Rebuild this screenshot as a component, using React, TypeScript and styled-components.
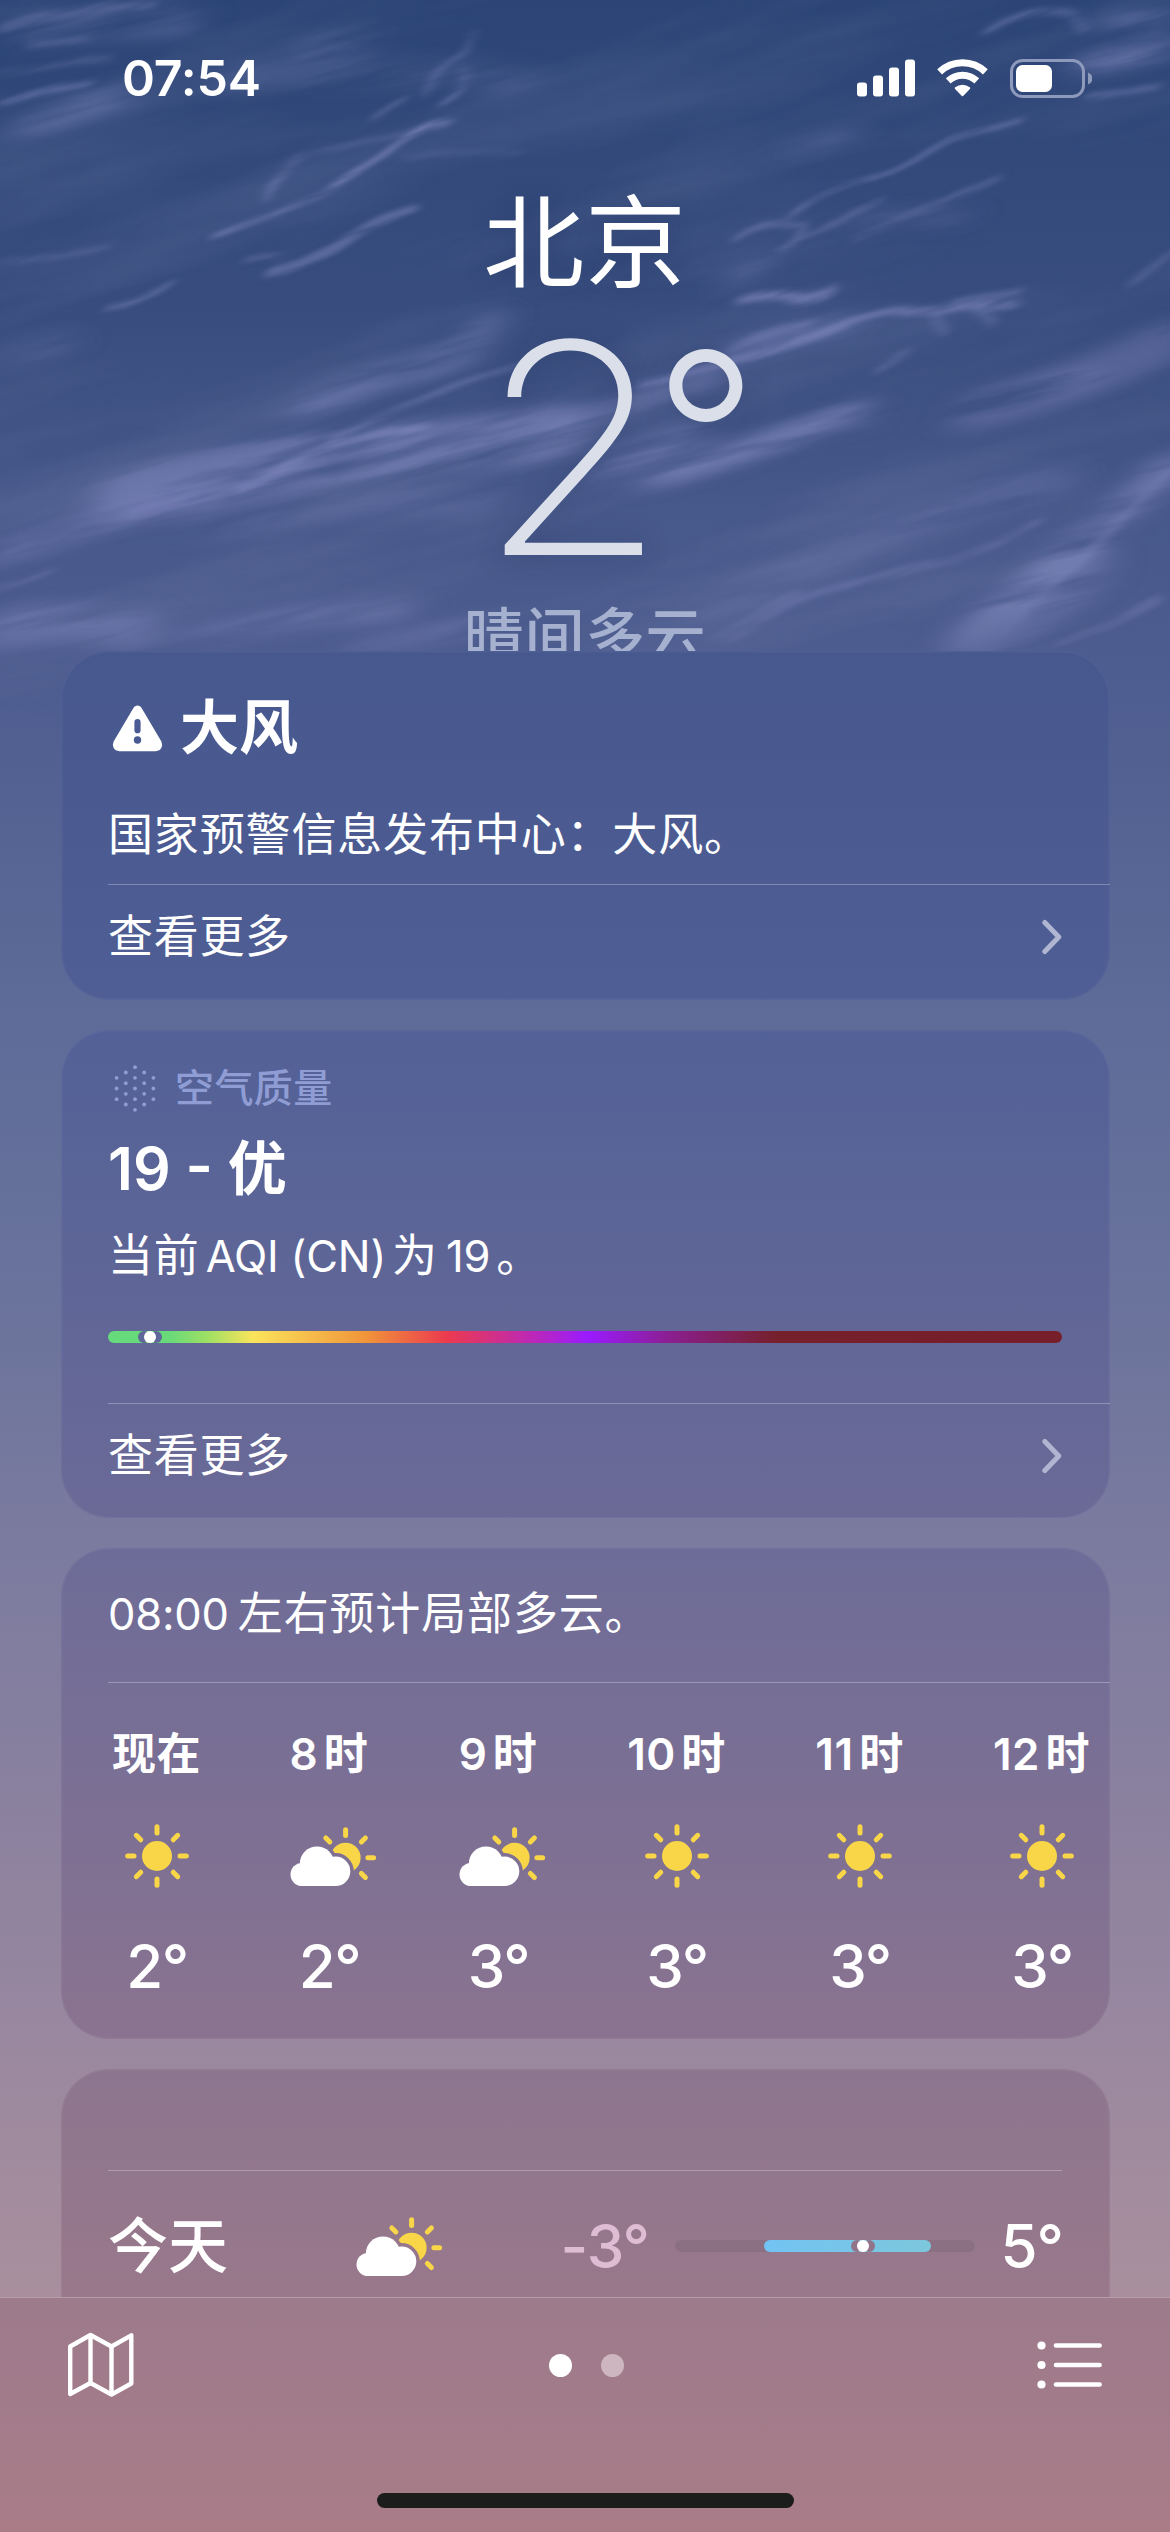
import React from 'react';
import styled, { createGlobalStyle } from 'styled-components';

const GlobalStyle = createGlobalStyle`
  * { box-sizing: border-box; }
  html, body { margin: 0; padding: 0; }
  body {
    font-family: Inter, "Noto Sans CJK SC", sans-serif;
    color: #fff;
    -webkit-font-smoothing: antialiased;
  }
  svg { display: block; }
`;

const Screen = styled.main`
  position: relative;
  display: flex;
  flex-direction: column;
  width: 1170px;
  height: 2532px;
  overflow: hidden;
  background: linear-gradient(
    180deg,
    #2c4576 0px,
    #384d7e 300px,
    #47588a 520px,
    #4f5e90 700px,
    #5d6b98 1000px,
    #6a739c 1300px,
    #7b7b9f 1540px,
    #8a819f 1800px,
    #9a889f 2050px,
    #a98f9d 2297px
  );
`;

const SkyLayer = styled.svg`
  position: absolute;
  inset: 0 0 auto 0;
  mask-image: linear-gradient(180deg, #000 600px, transparent 720px);
`;

const Content = styled.div`
  position: relative;
  display: flex;
  flex-direction: column;
  height: 2297px;
  overflow: hidden;
`;

const Header = styled.header`
  display: flex;
  flex-direction: column;
  height: 651px;
  flex: none;
  overflow: hidden;
`;

const StatusBar = styled.div`
  display: flex;
  align-items: center;
  justify-content: space-between;
  height: 156px;
  flex: none;
  padding: 0 78px 0 122px;
`;

const Clock = styled.time`
  font-size: 50px;
  font-weight: 600;
  line-height: 60px;
  letter-spacing: -0.2px;
`;

const StatusIcons = styled.div`
  display: flex;
  align-items: center;
  gap: 22px;
`;

const City = styled.h1`
  margin: 0;
  font-size: 101px;
  font-weight: 400;
  line-height: 174px;
  height: 172px;
  text-align: center;
  letter-spacing: 0.8px;
  text-shadow: 0 0 24px rgba(20, 35, 80, 0.3);
`;

const CurrentTemp = styled.div`
  padding-left: 478px;
  font-size: 294px;
  font-weight: 200;
  line-height: 240px;
  height: 240px;
  white-space: nowrap;
  color: #dadfe9;
  text-shadow: 0 0 30px rgba(20, 35, 80, 0.3);
`;

const TempDigit = styled.span`
  display: inline-block;
  transform: scaleX(1.045);
  transform-origin: left center;
`;

const TempDegree = styled.span`
  margin-left: -6px;
  font-size: 230px;
  font-weight: 260;
  line-height: 1px;
  vertical-align: 37px;
`;

const Condition = styled.div`
  margin-top: 26px;
  font-size: 60px;
  font-weight: 500;
  line-height: 84px;
  text-align: center;
  letter-spacing: 0.6px;
  color: #a6b0cf;
`;

const CardStack = styled.div`
  display: flex;
  flex-direction: column;
  gap: 30px;
  padding: 0 60px 0 61px;
`;

const Card = styled.section<{ $top: string; $bottom: string; $height: number; $pad: number }>`
  flex: none;
  height: ${(p) => p.$height}px;
  padding: ${(p) => p.$pad}px 0 0 47px;
  border-radius: 48px;
  overflow: hidden;
  background: linear-gradient(180deg, ${(p) => p.$top}, ${(p) => p.$bottom});
  box-shadow: inset 0 0 0 1.5px rgba(255, 255, 255, 0.045);
`;

const CardTitle = styled.h2<{ $line: number; $gap?: number }>`
  display: flex;
  align-items: center;
  gap: 13px;
  margin: ${(p) => p.$gap ?? 0}px 0 0;
  font-size: 59px;
  font-weight: 600;
  line-height: ${(p) => p.$line}px;
  white-space: pre;
`;

const CardLabel = styled.h3`
  display: flex;
  align-items: center;
  gap: 19px;
  margin: 0;
  padding-left: 6px;
  font-size: 39px;
  font-weight: 500;
  line-height: 52px;
  height: 50px;
  letter-spacing: 0.4px;
  color: #8f9dd4;
`;

const Body = styled.p<{ $gap?: number }>`
  height: 60px;
  margin: ${(p) => p.$gap ?? 0}px 0 0;
  font-size: 45px;
  font-weight: 400;
  line-height: 62px;
  letter-spacing: 0.85px;
  white-space: nowrap;
`;

const Latin = styled.span<{ $left?: number; $right?: number }>`
  margin: 0 ${(p) => p.$right ?? 6}px 0 ${(p) => p.$left ?? 6}px;
  font-size: 43.5px;
  letter-spacing: -0.2px;
`;

const Divider = styled.hr<{ $gap: number; $right?: number }>`
  height: 1px;
  margin: ${(p) => p.$gap}px ${(p) => p.$right ?? 0}px 0 0;
  border: 0;
  background: rgba(255, 255, 255, 0.28);
`;

const MoreRow = styled.div`
  display: flex;
  align-items: center;
  justify-content: space-between;
  height: 103px;
  padding-right: 48px;
  font-size: 45px;
  line-height: 60px;
  letter-spacing: 0.7px;
`;

const AqiBar = styled.div`
  display: flex;
  align-items: center;
  width: 954px;
  height: 12px;
  margin-top: 46px;
  border-radius: 6px;
  background: linear-gradient(
    90deg,
    #66da7c 0%,
    #69da79 6.5%,
    #9fe063 10.5%,
    #fbe45b 15.2%,
    #f0953a 27%,
    #ec3a4e 35.5%,
    #b927bd 45%,
    #9a1bff 50.3%,
    #8a1f8e 59%,
    #76202c 70%,
    #761f2b 100%
  );
`;

const RangeDot = styled.i<{ $ring: string }>`
  width: 12px;
  height: 12px;
  border-radius: 50%;
  background: #fff;
  box-shadow: -6px 0 0 0 ${(p) => p.$ring}, 6px 0 0 0 ${(p) => p.$ring};
`;

const AqiMarker = styled(RangeDot)`
  margin-left: 36px;
`;

const Hours = styled.div`
  display: grid;
  grid-template-columns: 171px 174px 164px 193px 173px 191px;
  width: 1066px;
  margin: 41px 0 0 -37px;
`;

const Hour = styled.div`
  display: flex;
  flex-direction: column;
  align-items: center;
`;

const HourLabel = styled.span`
  height: 60px;
  font-size: 44px;
  font-weight: 600;
  line-height: 61px;
  word-spacing: -6px;
  letter-spacing: 0.5px;
  white-space: nowrap;
`;

const HourIcon = styled.div<{ $cloudy: boolean }>`
  display: flex;
  align-items: center;
  height: 64px;
  margin: 40px 0 48px ${(p) => (p.$cloudy ? 8 : 0)}px;
`;

const HourTemp = styled.span`
  padding-left: 1px;
  font-size: 60px;
  font-weight: 500;
  line-height: 60px;
  letter-spacing: -1.5px;
`;

const DayRow = styled.div`
  display: grid;
  grid-template-columns: 248px 87px 206px 325px 89px;
  align-items: center;
  height: 150px;
  font-size: 60px;
  font-weight: 500;
  line-height: 80px;
  white-space: nowrap;
`;

const Low = styled.span`
  text-align: right;
  letter-spacing: -1px;
  color: #debcd4;
`;

const High = styled.span`
  text-align: right;
  letter-spacing: -1px;
`;

const Track = styled.div`
  display: flex;
  width: 300px;
  height: 12px;
  margin-left: 26px;
  padding-left: 89px;
  border-radius: 6px;
  background: #8b7084;
`;

const Fill = styled.div`
  display: flex;
  align-items: center;
  width: 167px;
  height: 12px;
  padding-left: 93px;
  border-radius: 6px;
  background: linear-gradient(90deg, #72c3f3, #7cc7dc);
`;

const Toolbar = styled.footer`
  position: relative;
  flex: none;
  display: flex;
  flex-direction: column;
  align-items: center;
  height: 235px;
  border-top: 1px solid #b59ca9;
  background: linear-gradient(180deg, #9d7b8b, #a27b8a 45%, #a97c88);
`;

const ToolbarRow = styled.div`
  display: flex;
  align-items: center;
  justify-content: space-between;
  width: 100%;
  height: 134px;
  padding: 0 67px 0 67px;
`;

const Pager = styled.div`
  display: flex;
  gap: 29px;
`;

const PageDot = styled.span<{ $active?: boolean }>`
  width: 23px;
  height: 23px;
  border-radius: 50%;
  background: ${(p) => (p.$active ? '#fff' : '#cdb6bf')};
`;

const HomeIndicator = styled.div`
  width: 417px;
  height: 15px;
  margin-top: 61px;
  border-radius: 8px;
  background: #1c1c1c;
`;

type Wisp = [path: string, width: number, opacity: number];

const fineWisps: Wisp[] = [
  ['M213 237 Q255 222 290 207 T345 178 T400 143 T450 123', 5, 0.75],
  ['M268 196 Q275 175 295 158', 9, 0.45],
  ['M300 155 Q370 140 450 126', 5, 0.25],
  ['M270 272 Q320 258 350 238 T415 207', 8, 0.5],
  ['M245 260 Q265 255 280 258', 5, 0.35],
  ['M108 307 Q145 300 175 282', 5, 0.5],
  ['M375 117 Q390 103 406 97', 5, 0.45],
  ['M425 95 Q440 60 464 54 L473 33', 5, 0.4],
  ['M440 105 Q472 86 463 71', 5, 0.5],
  ['M405 157 L520 151', 6, 0.2],
  ['M0 102 Q45 90 88 84', 7, 0.5],
  ['M0 72 Q60 66 110 58', 7, 0.25],
  ['M0 30 Q70 8 150 4', 9, 0.3],
  ['M30 44 L90 40', 8, 0.3],
  ['M0 262 Q60 256 110 245', 6, 0.25],
  ['M330 440 Q400 402 520 365', 6, 0.4],
  ['M240 486 Q275 474 300 461 T360 438 T425 428', 8, 0.7],
  ['M0 555 Q50 540 110 518 T240 480', 7, 0.22],
  ['M0 587 L52 570', 6, 0.35],
  ['M985 32 Q1030 5 1075 15 L1085 30', 7, 0.4],
  ['M790 217 Q815 192 860 180 T930 152 T1020 120', 5, 0.5],
  ['M735 240 Q760 222 780 224 T803 225 Q800 245 780 250', 6, 0.45],
  ['M805 238 Q850 215 882 200', 5, 0.35],
  ['M855 240 Q930 205 1000 178', 6, 0.3],
  ['M740 300 Q770 290 790 297 T833 290', 9, 0.65],
  ['M640 385 Q700 372 740 360 T830 330 T900 312 T960 306 L1015 305', 8, 0.6],
  ['M730 354 Q765 326 812 322', 8, 0.4],
  ['M932 310 L942 332', 9, 0.4],
  ['M980 310 L992 322', 9, 0.4],
  ['M955 300 L1020 293', 7, 0.4],
  ['M875 370 L905 352', 6, 0.3],
  ['M730 640 Q780 605 840 587 T940 563 T1040 520', 7, 0.35],
  ['M715 640 Q760 610 800 593', 6, 0.3],
  ['M1130 285 L1172 252', 7, 0.3],
  ['M1060 642 Q1110 628 1158 600', 8, 0.35],
  ['M1090 95 L1155 88', 7, 0.4],
  ['M1000 635 Q1060 580 1110 530 T1172 470', 9, 0.3],
];

const softWisps: Wisp[] = [
  ['M30 125 Q80 110 125 95', 24, 0.4],
  ['M20 30 Q90 20 185 22', 34, 0.3],
  ['M310 48 L368 38', 18, 0.45],
  ['M230 80 Q380 60 520 82', 28, 0.25],
  ['M300 412 Q360 380 420 366 T488 322', 26, 0.5],
  ['M120 500 Q250 462 360 455 T560 430', 54, 0.6],
  ['M0 555 Q150 500 300 470', 30, 0.3],
  ['M200 525 Q340 500 480 500', 30, 0.25],
  ['M0 632 Q60 616 140 632', 40, 0.6],
  ['M190 640 Q300 610 400 612', 24, 0.45],
  ['M350 652 L480 624', 20, 0.45],
  ['M1110 18 L1172 20', 18, 0.5],
  ['M1085 65 L1172 46', 20, 0.65],
  ['M795 148 L845 137', 14, 0.4],
  ['M730 280 L765 258', 14, 0.4],
  ['M860 222 Q900 215 960 218', 16, 0.3],
  ['M560 430 Q640 400 720 372', 26, 0.45],
  ['M740 350 Q790 328 850 326', 24, 0.4],
  ['M600 470 Q640 450 705 428', 26, 0.55],
  ['M655 478 Q740 455 800 430 T862 418', 22, 0.7],
  ['M970 412 Q1080 385 1172 340', 40, 0.35],
  ['M1050 385 L1090 378', 16, 0.4],
  ['M720 610 Q880 520 1060 480', 34, 0.25],
  ['M960 645 Q1010 600 1060 562 T1172 465', 30, 0.6],
  ['M980 655 Q1030 600 1080 570', 60, 0.42],
  ['M0 360 L60 345', 30, 0.2],
];

const drawWisps = (wisps: Wisp[]) =>
  wisps.map(([d, width, opacity]) => (
    <path key={d} d={d} strokeWidth={width} strokeOpacity={opacity} />
  ));

const Sky = () => (
  <SkyLayer width="1170" height="720" viewBox="0 0 1170 720" aria-hidden>
    <defs>
      <filter id="haze" x="0" y="0" width="100%" height="100%">
        <feTurbulence type="fractalNoise" baseFrequency="0.0022 0.013" numOctaves={5} seed={11} />
        <feColorMatrix values="0 0 0 0 0.45  0 0 0 0 0.49  0 0 0 0 0.72  2.6 0 0 0 -1.15" />
      </filter>
      <filter id="fine" filterUnits="userSpaceOnUse" x="-300" y="-400" width="1800" height="1600">
        <feTurbulence type="fractalNoise" baseFrequency="0.012 0.03" numOctaves={3} seed={4} result="n" />
        <feDisplacementMap in="SourceGraphic" in2="n" scale="8" xChannelSelector="R" yChannelSelector="G" result="d" />
        <feGaussianBlur in="d" stdDeviation="6 2" result="b" />
        <feTurbulence type="fractalNoise" baseFrequency="0.012 0.09" numOctaves={3} seed={21} />
        <feColorMatrix values="0 0 0 0 1  0 0 0 0 1  0 0 0 0 1  2 0 0 0 -0.1" result="m" />
        <feComposite in="b" in2="m" operator="in" />
      </filter>
      <filter id="soft" filterUnits="userSpaceOnUse" x="-300" y="-400" width="1800" height="1600">
        <feGaussianBlur in="SourceGraphic" stdDeviation="18 7" result="b" />
        <feTurbulence type="fractalNoise" baseFrequency="0.005 0.045" numOctaves={4} seed={8} />
        <feColorMatrix values="0 0 0 0 1  0 0 0 0 1  0 0 0 0 1  2.4 0 0 0 -0.45" result="m" />
        <feComposite in="b" in2="m" operator="in" />
      </filter>
    </defs>
    <g transform="rotate(-15 585 360)" opacity="0.1">
      <rect x="-200" y="-300" width="1600" height="1300" filter="url(#haze)" />
    </g>
    <g fill="none" stroke="#8087bd" strokeLinecap="round">
      <g transform="rotate(-14 585 360)" filter="url(#soft)">
        <g transform="rotate(14 585 360)">{drawWisps(softWisps)}</g>
      </g>
      <g transform="rotate(-20 585 360)" filter="url(#fine)">
        <g transform="rotate(20 585 360)">{drawWisps(fineWisps)}</g>
      </g>
    </g>
  </SkyLayer>
);

const SignalIcon = () => (
  <svg width="58" height="38" viewBox="0 0 58 38" fill="#fff">
    <rect x="0" y="23.5" width="10" height="14" rx="3" />
    <rect x="16" y="16.5" width="10" height="21" rx="3" />
    <rect x="32" y="8.5" width="10" height="29" rx="3" />
    <rect x="48" y="0.5" width="10" height="37" rx="3" />
  </svg>
);

const WifiIcon = () => (
  <svg width="51" height="38" viewBox="0 0 51 38" fill="none" stroke="#fff">
    <path d="M2.6 12.9 A33.4 33.4 0 0 1 48.4 12.9" strokeWidth="7" />
    <path d="M11.2 21.9 A21 21 0 0 1 39.8 21.9" strokeWidth="7" />
    <path d="M25.5 36 L19 29.2 A10.5 10.5 0 0 1 32 29.2 Z" fill="#fff" strokeWidth="2.5" strokeLinejoin="round" />
  </svg>
);

const BatteryIcon = () => (
  <svg width="82" height="39" viewBox="0 0 82 39">
    <rect x="1.5" y="1.5" width="72" height="36" rx="11" fill="none" stroke="#8d9abb" strokeWidth="3" />
    <rect x="6" y="6" width="36" height="27" rx="6.5" fill="#fff" />
    <path d="M78 13.5 Q82.5 15.5 82.5 19.5 T78 25.5 Z" fill="#8d9abb" />
  </svg>
);

const WarningIcon = () => (
  <svg width="59" height="60" viewBox="0 0 59 60">
    <path
      d="M29.5 12.3 L49 45.3 Q50.3 48.3 47.3 48.5 H11.7 Q8.7 48.3 10 45.3 Z"
      fill="#fff"
      stroke="#fff"
      strokeWidth="9.5"
      strokeLinejoin="round"
    />
    <path d="M29.5 24 V32.2" stroke="#4a5b93" strokeWidth="6.2" strokeLinecap="round" />
    <circle cx="29.5" cy="42" r="3.7" fill="#4a5b93" />
  </svg>
);

const AirIcon = () => {
  const columns: [number, number[]][] = [
    [-18.4, [-10.7, 0, 10.7]],
    [-9.2, [-16, -5.3, 5.3, 16]],
    [0, [-21.3, -10.7, 0, 10.7, 21.3]],
    [9.2, [-16, -5.3, 5.3, 16]],
    [18.4, [-10.7, 0, 10.7]],
  ];
  return (
    <svg width="42" height="47" viewBox="-21 -23.5 42 47" fill="#8f9dd4">
      {columns.flatMap(([x, ys]) => ys.map((y) => <circle key={`${x},${y}`} cx={x} cy={y} r={1.9} />))}
    </svg>
  );
};

const ChevronIcon = () => (
  <svg width="20" height="36" viewBox="0 0 20 36" fill="none" stroke="#b0b6d1" strokeWidth="5" strokeLinecap="round" strokeLinejoin="round">
    <path d="M2.8 3.5 L16.8 18 L2.8 32.5" />
  </svg>
);

const SUN = '#f9d648';

const SunIcon = () => (
  <svg width="64" height="64" viewBox="-32 -32 64 64">
    <circle r="15" fill={SUN} />
    <g stroke={SUN} strokeWidth="5" strokeLinecap="round">
      {[0, 45, 90, 135, 180, 225, 270, 315].map((a) => (
        <path key={a} d="M23 0 H29.3" transform={`rotate(${a})`} />
      ))}
    </g>
  </svg>
);

const CloudShape = () => (
  <>
    <circle cx="12" cy="48.5" r="11.5" />
    <circle cx="27" cy="37.7" r="17.2" />
    <circle cx="45.6" cy="45.3" r="14.7" />
    <rect x="12" y="40" width="34" height="20" />
  </>
);

const CloudSunIcon = ({ id }: { id: string }) => (
  <svg width="87" height="61" viewBox="0 0 87 61">
    <mask id={id}>
      <rect width="87" height="61" fill="#fff" />
      <g fill="#000" stroke="#000" strokeWidth="7">
        <CloudShape />
      </g>
    </mask>
    <g mask={`url(#${id})`}>
      <circle cx="55.6" cy="31.7" r="15" fill={SUN} />
    </g>
    <g stroke={SUN} strokeWidth="5" strokeLinecap="round">
      {[45, 0, -45, -90, -135].map((a) => (
        <path key={a} d="M22.3 0 H28" transform={`translate(55.6 31.7) rotate(${a})`} />
      ))}
    </g>
    <g fill="#fff">
      <CloudShape />
    </g>
  </svg>
);

const MapIcon = () => (
  <svg width="68" height="66" viewBox="0 0 68 66" fill="none" stroke="#fff" strokeWidth="4.4" strokeLinejoin="round">
    <path d="M3.2 14.5 L23.5 3 L44.5 14.5 L64.3 3.4 V51.5 L44.5 62.5 L23.5 51 L3.2 62 Z" />
    <path d="M23.5 3 V51 M44.5 14.5 V62.5" />
  </svg>
);

const ListIcon = () => (
  <svg width="66" height="50" viewBox="0 0 66 50" fill="#fff" stroke="#fff" strokeWidth="4.6" strokeLinecap="round">
    {[5.5, 25, 44.5].map((y) => (
      <g key={y}>
        <circle cx="4.5" cy={y} r="4.1" stroke="none" />
        <path d={`M19 ${y} H62.6`} />
      </g>
    ))}
  </svg>
);

const hours = [
  { label: '现在', temp: '2°', cloudy: false },
  { label: '8 时', temp: '2°', cloudy: true },
  { label: '9 时', temp: '3°', cloudy: true },
  { label: '10 时', temp: '3°', cloudy: false },
  { label: '11 时', temp: '3°', cloudy: false },
  { label: '12 时', temp: '3°', cloudy: false },
];

export default function App() {
  return (
    <>
      <GlobalStyle />
      <Screen>
        <Sky />
        <Content>
          <Header>
            <StatusBar>
              <Clock>07:54</Clock>
              <StatusIcons>
                <SignalIcon />
                <WifiIcon />
                <BatteryIcon />
              </StatusIcons>
            </StatusBar>
            <City>北京</City>
            <CurrentTemp>
              <TempDigit>2</TempDigit>
              <TempDegree>°</TempDegree>
            </CurrentTemp>
            <Condition>晴间多云</Condition>
          </Header>

          <CardStack>
            <Card $top="#47588f" $bottom="#4f5e94" $height={349} $pad={30}>
              <CardTitle $line={94}>
                <WarningIcon />
                大风
              </CardTitle>
              <Body $gap={29}>国家预警信息发布中心：大风。</Body>
              <Divider $gap={20} />
              <MoreRow>
                查看更多
                <ChevronIcon />
              </MoreRow>
            </Card>

            <Card $top="#526197" $bottom="#6b6a97" $height={488} $pad={33}>
              <CardLabel>
                <AirIcon />
                空气质量
              </CardLabel>
              <CardTitle $line={72} $gap={20}>19 - 优</CardTitle>
              <Body $gap={20}>
                当前<Latin>AQI (CN)</Latin>为<Latin $left={8}>19</Latin>。
              </Body>
              <AqiBar>
                <AqiMarker $ring="#5e6798" />
              </AqiBar>
              <Divider $gap={60} />
              <MoreRow>
                查看更多
                <ChevronIcon />
              </MoreRow>
            </Card>

            <Card $top="#6d6c98" $bottom="#8a7390" $height={491} $pad={35}>
              <Body>
                <Latin $left={0} $right={9}>08:00</Latin>左右预计局部多云。
              </Body>
              <Divider $gap={39} />
              <Hours>
                {hours.map((h) => (
                  <Hour key={h.label}>
                    <HourLabel>{h.label}</HourLabel>
                    <HourIcon $cloudy={h.cloudy}>
                      {h.cloudy ? <CloudSunIcon id={`hour-${parseInt(h.label)}`} /> : <SunIcon />}
                    </HourIcon>
                    <HourTemp>{h.temp}</HourTemp>
                  </Hour>
                ))}
              </Hours>
            </Card>

            <Card $top="#8c768f" $bottom="#9c788a" $height={280} $pad={101}>
              <Divider $gap={0} $right={48} />
              <DayRow>
                <span>今天</span>
                <CloudSunIcon id="today" />
                <Low>-3°</Low>
                <Track>
                  <Fill>
                    <RangeDot $ring="#92748a" />
                  </Fill>
                </Track>
                <High>5°</High>
              </DayRow>
            </Card>
          </CardStack>
        </Content>

        <Toolbar>
          <ToolbarRow>
            <MapIcon />
            <Pager>
              <PageDot $active />
              <PageDot />
            </Pager>
            <ListIcon />
          </ToolbarRow>
          <HomeIndicator />
        </Toolbar>
      </Screen>
    </>
  );
}
